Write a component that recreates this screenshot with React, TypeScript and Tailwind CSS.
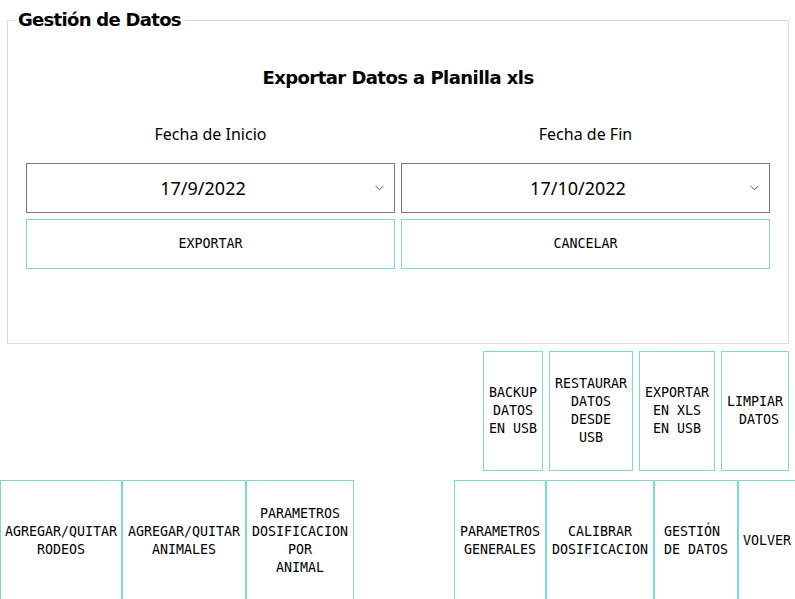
import React from "react";

const TEAL = "border-[#7fdac9]";

const mono = { fontFamily: '"DejaVu Sans Mono", "Liberation Mono", monospace' };

const TileButton: React.FC<{ lines: string[]; className?: string }> = ({ lines, className }) => (
  <button
    className={`flex flex-col items-center justify-center border ${TEAL} bg-white text-[13.3px] leading-[18px] text-black whitespace-pre shrink-0 ${className ?? ""}`}
    style={mono}
  >
    {lines.map((l, i) => (
      <span key={i}>{l}</span>
    ))}
  </button>
);

const DateSelect: React.FC<{ value: string }> = ({ value }) => (
  <div className="h-[50px] border border-[#7a7a7a] bg-white flex items-center pl-[4px] pr-[10px]">
    <span className="flex-1 text-center text-[18px] text-black">{value}</span>
    <svg width="9" height="6" viewBox="0 0 9 6" className="shrink-0">
      <path d="M0.5 0.8 L4.5 4.8 L8.5 0.8" fill="none" stroke="#555" strokeWidth="1" />
    </svg>
  </div>
);

export default function App() {
  return (
    <div
      className="w-[795px] h-[599px] overflow-hidden bg-white flex flex-col"
      style={{ fontFamily: '"Noto Sans", "Open Sans", sans-serif' }}
    >
      {/* Gestión de Datos group */}
      <fieldset className="ml-[7px] mt-[8px] w-[782px] h-[336px] border border-[#dcdcdc] shrink-0">
        <legend
          className="ml-[7px] px-[3px] text-[18px] leading-[24px] font-bold text-black"
          style={{ fontFamily: '"DejaVu Sans", sans-serif', letterSpacing: "-0.7px" }}
        >
          Gestión de Datos
        </legend>
        <div className="flex flex-col">
          <h2
            className="mt-[34px] text-center text-[18px] leading-[24px] font-bold text-black"
            style={{ fontFamily: '"DejaVu Sans", sans-serif', letterSpacing: "-0.55px" }}
          >
            Exportar Datos a Planilla xls
          </h2>
          <div className="grid grid-cols-2 gap-x-[6px] px-[18px] mt-[32px]">
            <div className="text-center text-[16px] leading-[24px] text-black">Fecha de Inicio</div>
            <div className="text-center text-[16px] leading-[24px] text-black">Fecha de Fin</div>
            <div className="mt-[17px]">
              <DateSelect value="17/9/2022" />
            </div>
            <div className="mt-[17px]">
              <DateSelect value="17/10/2022" />
            </div>
            <div className="mt-[6px]">
              <TileButton lines={["EXPORTAR"]} className="w-full h-[50px]" />
            </div>
            <div className="mt-[6px]">
              <TileButton lines={["CANCELAR"]} className="w-full h-[50px]" />
            </div>
          </div>
        </div>
      </fieldset>

      {/* Data actions */}
      <div className="flex justify-end gap-[6px] pr-[6px] mt-[7px] shrink-0">
        <TileButton lines={["BACKUP", "DATOS", "EN USB"]} className="w-[60px] h-[120px]" />
        <TileButton lines={["RESTAURAR", "DATOS", "DESDE", "USB"]} className="w-[84px] h-[120px]" />
        <TileButton lines={["EXPORTAR", "EN XLS", "EN USB"]} className="w-[76px] h-[120px]" />
        <TileButton lines={["LIMPIAR", " DATOS"]} className="w-[68px] h-[120px]" />
      </div>

      {/* Main menu */}
      <div className="flex mt-[9px] h-[122px] shrink-0">
        <TileButton lines={["AGREGAR/QUITAR", "RODEOS"]} className="w-[122px] h-full" />
        <TileButton lines={["AGREGAR/QUITAR", "ANIMALES"]} className="w-[124px] h-full" />
        <TileButton lines={["PARAMETROS", "DOSIFICACION", "POR", "ANIMAL"]} className="w-[108px] h-full" />
        <div className="w-[100px] shrink-0" />
        <TileButton lines={["PARAMETROS", "GENERALES"]} className="w-[92px] h-full" />
        <TileButton lines={["CALIBRAR", "DOSIFICACION"]} className="w-[108px] h-full" />
        <TileButton lines={["GESTIÓN ", "DE DATOS"]} className="w-[84px] h-full" />
        <TileButton lines={["VOLVER"]} className="w-[58px] h-full" />
      </div>
    </div>
  );
}
